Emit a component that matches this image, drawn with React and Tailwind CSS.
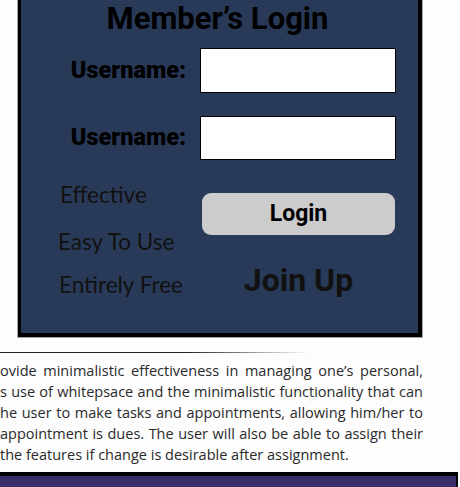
export default function App() {
  const lines = [
    "ovide minimalistic effectiveness in managing one’s personal,",
    "s use of whitepsace and the minimalistic functionality that can",
    "he user to make tasks and appointments, allowing him/her to",
    "appointment is dues. The user will also be able to assign their",
  ]

  return (
    <div className="w-[460px] h-[487px] overflow-hidden bg-[#fdfdfd] font-['Roboto',sans-serif]">
      {/* login panel, top edge is scrolled out of view */}
      <div className="ml-[18px] mt-[-20px] w-[404px] h-[357px] border-[3px] border-b-4 border-r-4 border-black bg-[#293a59] outline outline-1 outline-[#a8a8a8]">
        <div className="pt-[18px]">
          <h1 className="h-[36px] leading-[36px] text-center text-[31px] font-bold text-black pr-[4px]">Member’s Login</h1>
        </div>

        <div className="mt-[11px] flex items-center">
          <div className="w-[165px] text-right text-[23.5px] font-black text-black">Username:</div>
          <div className="ml-[14px] w-[196px] h-[45px] bg-white border-[1.5px] border-black" />
        </div>

        <div className="mt-[23px] flex items-center">
          <div className="w-[165px] text-right text-[23.5px] font-black text-black">Username:</div>
          <div className="ml-[14px] w-[196px] h-[44px] bg-white border-[1.5px] border-black" />
        </div>

        <div className="flex">
          <div className="w-[165px] pl-[39px] font-['Lato',sans-serif] text-[22.5px] text-[#111] leading-[28px] whitespace-nowrap">
            <div className="mt-[21px]">Effective</div>
            <div className="mt-[19px] ml-[-2px]">Easy To Use</div>
            <div className="mt-[15px] ml-[-1px]">Entirely Free</div>
          </div>
          <div className="ml-[16px] w-[193px]">
            <button className="mt-[33px] w-[193px] h-[42px] rounded-[9px] bg-[#cccccc] text-[23px] font-bold text-black">
              Login
            </button>
            <div className="mt-[27px] h-[36px] leading-[36px] text-center text-[32px] font-bold text-[#111]">
              Join Up
            </div>
          </div>
        </div>
      </div>

      <div className="mt-[15px] h-[1px] w-[310px] bg-linear-to-r from-[#222] from-60% to-transparent" />

      <div className="mt-[7px] w-[423px] font-['Open_Sans',sans-serif] text-[14.5px] leading-[21px] text-[#2a2a2a]">
        {lines.map((l) => (
          <p key={l} className="text-justify [text-align-last:justify]">{l}</p>
        ))}
        <p>the features if change is desirable after assignment.</p>
      </div>

      <div className="mt-[7px] w-[458px] h-[40px] border-t-4 border-r-2 border-black bg-[#3b2c6b]" />
    </div>
  )
}
